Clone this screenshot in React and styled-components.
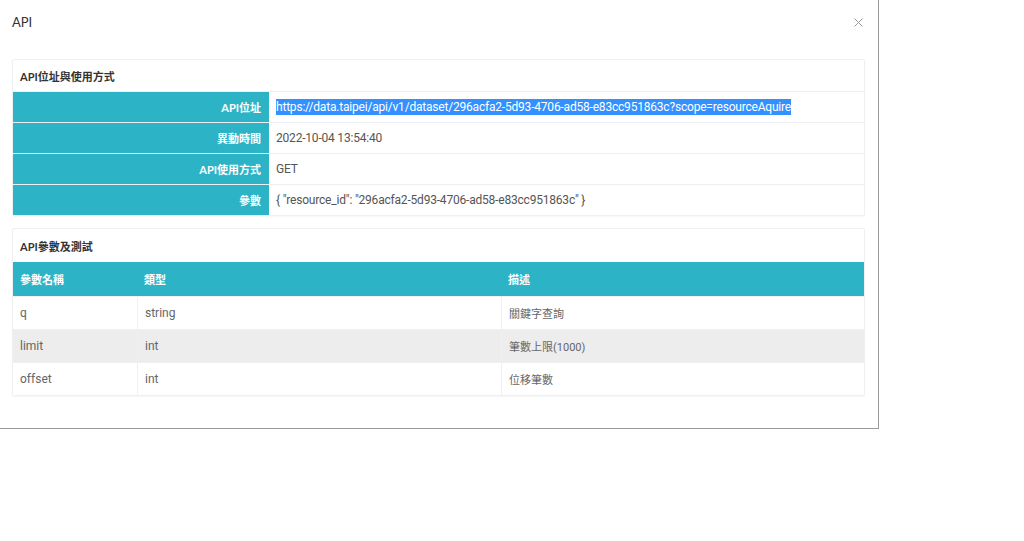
import React from "react";
import styled, { createGlobalStyle } from "styled-components";

const Global = createGlobalStyle`
  html, body { margin: 0; padding: 0; background: #fff; }
  body { font-family: Roboto, "Noto Sans CJK TC", sans-serif; color: #333; }
`;

const TEAL = "#2cb4c6";

const Page = styled.div`
  width: 1024px;
  height: 541px;
  background: #fff;
`;

const Modal = styled.div`
  width: 878px;
  height: 428px;
  background: #fff;
  border-right: 1px solid #999;
  border-bottom: 1px solid #999;
  display: flex;
  flex-direction: column;
`;

const ModalHeader = styled.div`
  height: 44px;
  display: flex;
  align-items: center;
  justify-content: space-between;
  padding: 0 14px 0 12px;
`;

const Title = styled.div`
  font-family: Lato, "Noto Sans CJK TC", sans-serif;
  font-size: 13px;
  color: #333;
`;

const Close = styled.button`
  border: 0;
  background: none;
  padding: 0;
  width: 12px;
  height: 12px;
  display: flex;
  align-items: center;
  justify-content: center;
  cursor: pointer;
`;

const Body = styled.div`
  padding: 15px 13px 0 12px;
  display: flex;
  flex-direction: column;
  gap: 12px;
`;

const Card = styled.div`
  border: 1px solid #eef0f2;
  border-radius: 2px;
  box-shadow: 0 1px 2px rgba(0, 0, 0, 0.04);
  background: #fff;
`;

const CardHeader = styled.div`
  height: ${(p) => p.$h}px;
  display: flex;
  align-items: center;
  padding: 0 7px;
  font-family: Lato, "Noto Sans CJK TC", sans-serif;
  font-size: 11px;
  font-weight: 700;
  color: #333;
`;

const InfoRow = styled.div`
  display: grid;
  grid-template-columns: 256px 1fr;
  height: 31px;
  border-top: 1px solid #eceff2;
  box-sizing: border-box;
`;

const Label = styled.div`
  background: ${TEAL};
  color: #fff;
  font-family: Lato, "Noto Sans CJK TC", sans-serif;
  font-weight: 700;
  font-size: 11px;
  display: flex;
  align-items: center;
  justify-content: flex-end;
  padding-right: 8px;
`;

const Value = styled.div`
  display: flex;
  align-items: center;
  padding-left: 7px;
  font-size: 12px;
  letter-spacing: -0.2px;
  color: #555;
  white-space: nowrap;
`;

const Selected = styled.span`
  background: #3390ff;
  color: #fff;
  padding: 1px 0;
`;

const Table = styled.div`
  display: grid;
  grid-template-columns: 124px 364px 1fr;
`;

const Th = styled.div`
  background: ${TEAL};
  color: #fff;
  font-weight: 700;
  font-size: 11px;
  height: 34px;
  display: flex;
  align-items: center;
  padding-left: 7px;
`;

const Td = styled.div`
  height: 33px;
  box-sizing: border-box;
  display: flex;
  align-items: center;
  padding-left: 7px;
  font-size: ${(p) => (p.$cjk ? "11px" : "12px")};
  color: #666;
  background: ${(p) => (p.$alt ? "#ededed" : "#fff")};
  border-left: ${(p) => (p.$first ? "0" : "1px solid #eef0f5")};
  border-top: 1px solid #f0f0f0;
`;

const info = [
  ["API位址", null],
  ["異動時間", "2022-10-04 13:54:40"],
  ["API使用方式", "GET"],
  ["參數", '{ "resource_id": "296acfa2-5d93-4706-ad58-e83cc951863c" }'],
];

const params = [
  ["q", "string", "關鍵字查詢"],
  ["limit", "int", "筆數上限(1000)"],
  ["offset", "int", "位移筆數"],
];

export default function App() {
  return (
    <Page>
      <Global />
      <Modal>
        <ModalHeader>
          <Title>API</Title>
          <Close aria-label="close">
            <svg width="9" height="9" viewBox="0 0 9 9">
              <path d="M0.5 0.5 L8.5 8.5 M8.5 0.5 L0.5 8.5" stroke="#999" strokeWidth="1" />
            </svg>
          </Close>
        </ModalHeader>
        <Body>
          <Card>
            <CardHeader $h={31}>API位址與使用方式</CardHeader>
            {info.map(([k, v]) => (
              <InfoRow key={k}>
                <Label>{k}</Label>
                <Value>
                  {v === null ? (
                    <Selected>
                      https://data.taipei/api/v1/dataset/296acfa2-5d93-4706-ad58-e83cc951863c?scope=resourceAquire
                    </Selected>
                  ) : (
                    v
                  )}
                </Value>
              </InfoRow>
            ))}
          </Card>
          <Card>
            <CardHeader $h={33}>API參數及測試</CardHeader>
            <Table>
              <Th>參數名稱</Th>
              <Th>類型</Th>
              <Th>描述</Th>
              {params.map((r, i) =>
                r.map((c, j) => (
                  <Td key={i + "-" + j} $alt={i === 1} $first={j === 0} $cjk={j === 2}>
                    {c}
                  </Td>
                ))
              )}
            </Table>
          </Card>
        </Body>
      </Modal>
    </Page>
  );
}
